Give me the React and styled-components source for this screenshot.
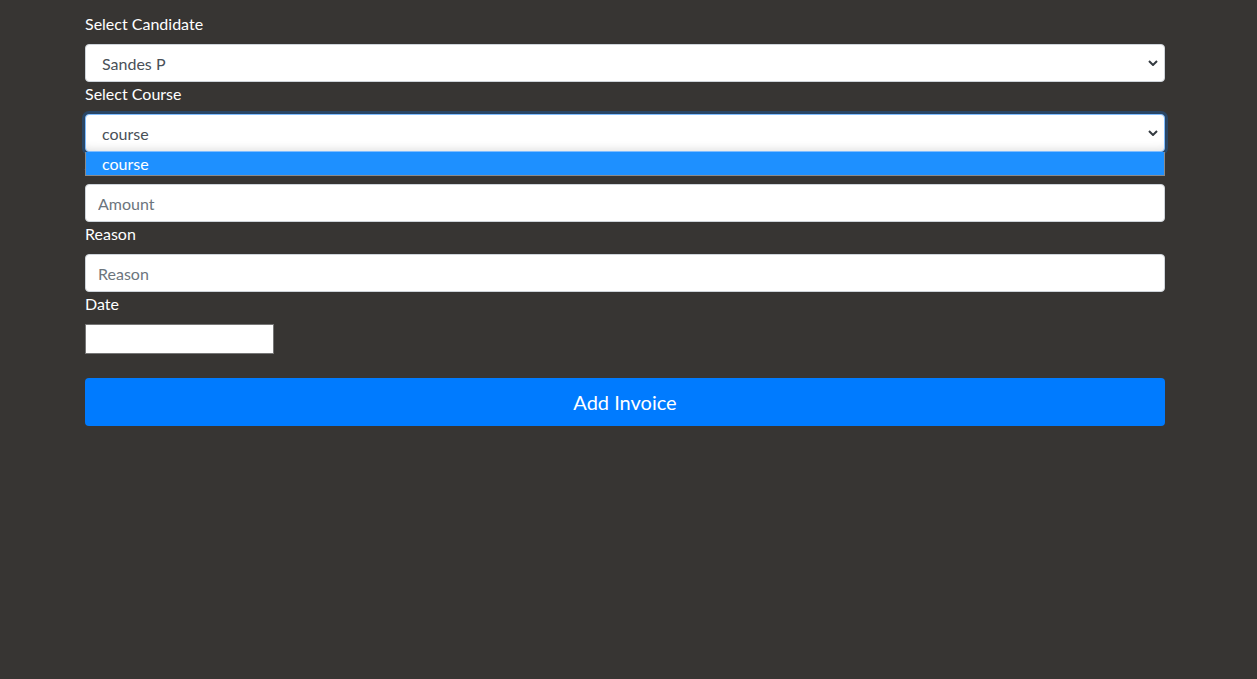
import React from "react";
import styled, { createGlobalStyle } from "styled-components";

const Global = createGlobalStyle`
  html, body { margin: 0; padding: 0; background: #373533; }
  body { font-family: Lato, "Open Sans", sans-serif; font-size: 16px; line-height: 1.5; }
  * { box-sizing: border-box; }
`;

const Page = styled.div`
  width: 1257px;
  height: 679px;
  background: #373533;
  padding: 12px 92px 0 85px;
`;

const Form = styled.form`
  width: 1080px;
  display: flex;
  flex-direction: column;
`;

const Group = styled.div`
  position: relative;
  display: flex;
  flex-direction: column;
`;

const Label = styled.label`
  color: #ffffff;
  font-size: 16px;
  line-height: 24px;
  margin-bottom: 8px;
`;

const chevron = `url("data:image/svg+xml,%3Csvg xmlns='http://www.w3.org/2000/svg' width='10' height='6' viewBox='0 0 10 6'%3E%3Cpath d='M1 1l4 4 4-4' fill='none' stroke='%23343a40' stroke-width='2'/%3E%3C/svg%3E")`;

const Select = styled.select`
  appearance: none;
  width: 100%;
  height: 38px;
  padding: 6px 28px 6px 16px;
  font-family: inherit;
  font-size: 16px;
  color: #495057;
  background: #fff ${chevron} no-repeat right 6px center / 10px 6px;
  border: 1px solid ${(p) => (p.$focused ? "#80bdff" : "#ced4da")};
  border-radius: 4px;
  outline: none;
  box-shadow: ${(p) =>
    p.$focused ? "0 0 0 3px rgba(0,123,255,0.25), inset 0 -8px 8px -6px rgba(0,0,0,0.12)" : "none"};
`;

const Input = styled.input`
  width: 100%;
  height: 38px;
  padding: 6px 12px;
  font-family: inherit;
  font-size: 16px;
  color: #495057;
  background: #fff;
  border: 1px solid #ced4da;
  border-radius: 4px;
  outline: none;
  &::placeholder { color: #6c757d; }
`;

const DateInput = styled.input`
  width: 189px;
  height: 30px;
  background: #fff;
  border: 1px solid #767676;
  font-family: inherit;
  color: transparent;
  &::-webkit-datetime-edit { opacity: 0; }
  &::-webkit-calendar-picker-indicator { opacity: 0; }
`;

const Dropdown = styled.ul`
  position: absolute;
  left: 0;
  right: 0;
  top: 70px;
  margin: 0;
  padding: 0;
  list-style: none;
  border: 1px solid #8a8a8a;
  border-top: none;
  background: #fff;
  z-index: 5;
`;

const Option = styled.li`
  height: 23px;
  line-height: 23px;
  padding-left: 16px;
  font-size: 16px;
  color: #fff;
  background: #1e90ff;
`;

const Button = styled.button`
  width: 100%;
  height: 48px;
  margin-top: 24px;
  border: none;
  border-radius: 4px;
  background: #007bff;
  color: #fff;
  font-family: inherit;
  font-size: 20px;
  cursor: pointer;
`;

export default function App() {
  return (
    <Page>
      <Global />
      <Form onSubmit={(e) => e.preventDefault()}>
        <Group>
          <Label>Select Candidate</Label>
          <Select defaultValue="sandes">
            <option value="sandes">Sandes P</option>
          </Select>
        </Group>
        <Group>
          <Label>Select Course</Label>
          <Select $focused defaultValue="course">
            <option value="course">course</option>
          </Select>
          <Dropdown>
            <Option>course</Option>
          </Dropdown>
        </Group>
        <Group>
          <Label>Amount</Label>
          <Input placeholder="Amount" />
        </Group>
        <Group>
          <Label>Reason</Label>
          <Input placeholder="Reason" />
        </Group>
        <Group>
          <Label>Date</Label>
          <DateInput type="date" />
        </Group>
        <Button type="submit">Add Invoice</Button>
      </Form>
    </Page>
  );
}
